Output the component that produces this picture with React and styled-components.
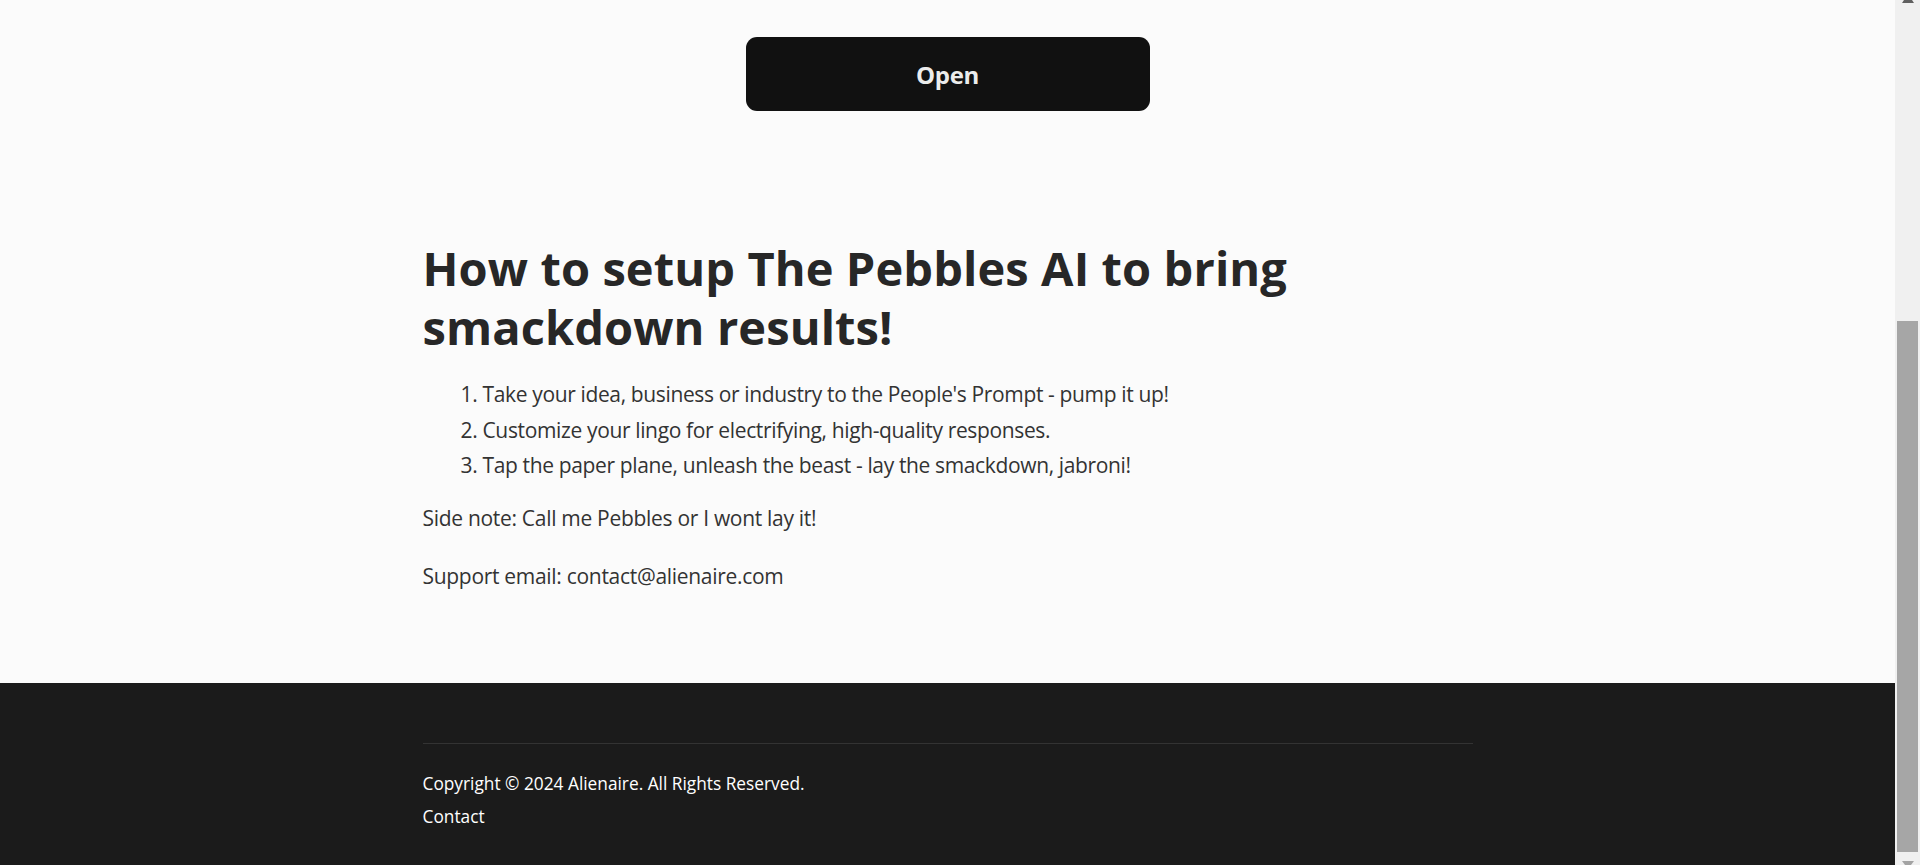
import React from "react";
import styled, { createGlobalStyle } from "styled-components";

const GlobalStyle = createGlobalStyle`
  html, body {
    margin: 0;
    padding: 0;
    overflow: hidden;
    background: #fbfbfb;
  }
  body {
    font-family: "Open Sans", "Noto Sans", "Liberation Sans", sans-serif;
    -webkit-font-smoothing: antialiased;
  }
  * { box-sizing: border-box; }
`;

const Frame = styled.div`
  display: flex;
  width: 1920px;
  height: 865px;
  overflow: hidden;
`;

const Page = styled.div`
  flex: 1;
  display: flex;
  flex-direction: column;
  background: #fbfbfb;
`;

const ButtonBar = styled.div`
  display: flex;
  justify-content: center;
  padding-top: 37px;
`;

const OpenButton = styled.button`
  width: 404px;
  height: 74px;
  border: none;
  border-radius: 11px;
  background: #111111;
  color: #ececec;
  font-family: inherit;
  font-size: 24px;
  font-weight: 700;
  letter-spacing: -0.3px;
  cursor: pointer;
`;

const Content = styled.section`
  width: 1050px;
  margin: 0 auto;
  padding-top: 128px;
  color: #333333;
`;

const Heading = styled.h2`
  margin: 0;
  font-size: 47px;
  line-height: 59px;
  font-weight: 700;
  color: #272727;
  letter-spacing: 0.1px;
`;

const Steps = styled.ol`
  margin: 20px 0 0;
  padding-left: 60px;
  font-size: 21px;
  line-height: 35.5px;
  letter-spacing: -0.36px;
`;

const Step = styled.li`
  padding-left: 0;
`;

const Note = styled.p`
  margin: ${(p) => p.$top}px 0 0;
  font-size: 21px;
  line-height: 35.5px;
  letter-spacing: -0.3px;
`;

const Footer = styled.footer`
  margin-top: auto;
  flex: 0 0 182px;
  background: #1b1b1b;
  padding-top: 60px;
`;

const FooterInner = styled.div`
  width: 1050px;
  margin: 0 auto;
  border-top: 1px solid #333333;
  padding-top: 23px;
  color: #ffffff;
  font-size: 17.3px;
  line-height: 33px;
  letter-spacing: 0;
`;

const FooterLine = styled.div``;

const FooterLink = styled.a`
  color: #ffffff;
  text-decoration: none;
`;

const ScrollTrack = styled.div`
  flex: 0 0 25px;
  display: flex;
  flex-direction: column;
  align-items: center;
  background: #f0f0f0;
`;

const ArrowSlot = styled.div`
  height: ${(p) => p.$h}px;
  width: 25px;
  display: flex;
  justify-content: center;
  align-items: ${(p) => (p.$down ? "flex-end" : "flex-start")};
`;

const Thumb = styled.div`
  margin-top: ${(p) => p.$top}px;
  width: 21px;
  height: ${(p) => p.$h}px;
  background: #a6a6a6;
`;

export default function App() {
  return (
    <>
      <GlobalStyle />
      <Frame>
        <Page>
          <ButtonBar>
            <OpenButton>Open</OpenButton>
          </ButtonBar>
          <Content>
            <Heading>How to setup The Pebbles AI to bring smackdown results!</Heading>
            <Steps>
              <Step>Take your idea, business or industry to the People's Prompt - pump it up!</Step>
              <Step>Customize your lingo for electrifying, high-quality responses.</Step>
              <Step>Tap the paper plane, unleash the beast - lay the smackdown, jabroni!</Step>
            </Steps>
            <Note $top={17}>Side note: Call me Pebbles or I wont lay it!</Note>
            <Note $top={23}>Support email: contact@alienaire.com</Note>
          </Content>
          <Footer>
            <FooterInner>
              <FooterLine>Copyright © 2024 Alienaire. All Rights Reserved.</FooterLine>
              <FooterLine>
                <FooterLink href="#contact">Contact</FooterLink>
              </FooterLine>
            </FooterInner>
          </Footer>
        </Page>
        <ScrollTrack>
          <ArrowSlot $h={3}>
            <svg width="12" height="3" viewBox="0 0 12 3">
              <polygon points="2,0 10,0 12,3 0,3" fill="#606060" />
            </svg>
          </ArrowSlot>
          <Thumb $top={318} $h={531} />
          <ArrowSlot $h={13} $down>
            <svg width="12" height="4" viewBox="0 0 12 4">
              <polygon points="0,0 12,0 9,4 3,4" fill="#a3a3a3" />
            </svg>
          </ArrowSlot>
        </ScrollTrack>
      </Frame>
    </>
  );
}
